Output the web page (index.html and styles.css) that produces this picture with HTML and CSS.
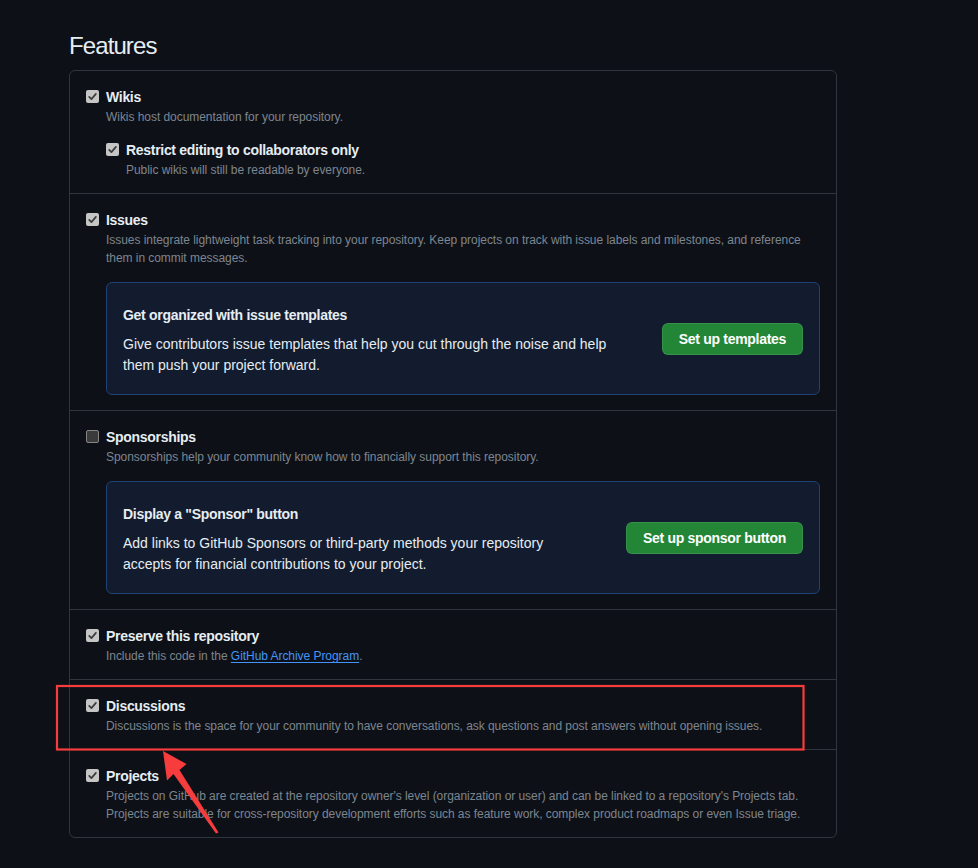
FILE: index.html
```html
<!DOCTYPE html>
<html lang="en">
<head>
<meta charset="utf-8">
<title>Features</title>
<link rel="stylesheet" href="styles.css">
</head>
<body>
<div class="page">
  <section class="settings">
    <h2 class="heading">Features</h2>
    <div class="box">
      <div class="row">
        <div class="feature">
          <span class="check on"><svg viewBox="0 0 13 13" width="13" height="13"><path d="M3.2 6.9 L5.4 9.1 L9.9 3.9" fill="none" stroke="#3b3b3b" stroke-width="1.7" stroke-linecap="round" stroke-linejoin="round"/></svg></span>
          <div class="title">Wikis</div>
          <p class="desc">Wikis host documentation for your repository.</p>
          <div class="feature nested">
            <span class="check on"><svg viewBox="0 0 13 13" width="13" height="13"><path d="M3.2 6.9 L5.4 9.1 L9.9 3.9" fill="none" stroke="#3b3b3b" stroke-width="1.7" stroke-linecap="round" stroke-linejoin="round"/></svg></span>
            <div class="title">Restrict editing to collaborators only</div>
            <p class="desc">Public wikis will still be readable by everyone.</p>
          </div>
        </div>
      </div>

      <div class="row">
        <div class="feature">
          <span class="check on"><svg viewBox="0 0 13 13" width="13" height="13"><path d="M3.2 6.9 L5.4 9.1 L9.9 3.9" fill="none" stroke="#3b3b3b" stroke-width="1.7" stroke-linecap="round" stroke-linejoin="round"/></svg></span>
          <div class="title">Issues</div>
          <p class="desc">Issues integrate lightweight task tracking into your repository. Keep projects on track with issue labels and milestones, and reference<br>them in commit messages.</p>
          <div class="promo">
            <div class="promo-text">
              <h3 class="promo-title">Get organized with issue templates</h3>
              <p class="promo-body">Give contributors issue templates that help you cut through the noise and help<br>them push your project forward.</p>
            </div>
            <button class="btn" type="button">Set up templates</button>
          </div>
        </div>
      </div>

      <div class="row">
        <div class="feature">
          <span class="check off"></span>
          <div class="title">Sponsorships</div>
          <p class="desc">Sponsorships help your community know how to financially support this repository.</p>
          <div class="promo">
            <div class="promo-text">
              <h3 class="promo-title">Display a "Sponsor" button</h3>
              <p class="promo-body">Add links to GitHub Sponsors or third-party methods your repository<br>accepts for financial contributions to your project.</p>
            </div>
            <button class="btn" type="button">Set up sponsor button</button>
          </div>
        </div>
      </div>

      <div class="row">
        <div class="feature">
          <span class="check on"><svg viewBox="0 0 13 13" width="13" height="13"><path d="M3.2 6.9 L5.4 9.1 L9.9 3.9" fill="none" stroke="#3b3b3b" stroke-width="1.7" stroke-linecap="round" stroke-linejoin="round"/></svg></span>
          <div class="title">Preserve this repository</div>
          <p class="desc">Include this code in the <a class="link" href="#">GitHub Archive Program</a>.</p>
        </div>
      </div>

      <div class="row">
        <div class="feature">
          <span class="check on"><svg viewBox="0 0 13 13" width="13" height="13"><path d="M3.2 6.9 L5.4 9.1 L9.9 3.9" fill="none" stroke="#3b3b3b" stroke-width="1.7" stroke-linecap="round" stroke-linejoin="round"/></svg></span>
          <div class="title">Discussions</div>
          <p class="desc">Discussions is the space for your community to have conversations, ask questions and post answers without opening issues.</p>
        </div>
      </div>

      <div class="row">
        <div class="feature">
          <span class="check on"><svg viewBox="0 0 13 13" width="13" height="13"><path d="M3.2 6.9 L5.4 9.1 L9.9 3.9" fill="none" stroke="#3b3b3b" stroke-width="1.7" stroke-linecap="round" stroke-linejoin="round"/></svg></span>
          <div class="title">Projects</div>
          <p class="desc">Projects on GitHub are created at the repository owner's level (organization or user) and can be linked to a repository's Projects tab.<br>Projects are suitable for cross-repository development efforts such as feature work, complex product roadmaps or even Issue triage.</p>
        </div>
      </div>
    </div>
  </section>

  <svg class="annotation" width="978" height="868" viewBox="0 0 978 868" aria-hidden="true">
    <rect x="57" y="686" width="746.5" height="63.5" fill="none" stroke="#f63c3c" stroke-width="2.2"/>
    <polygon points="163,751 186.5,764 179.5,770 218.5,832.5 216,833.5 173.5,774 167,780.5" fill="#f63c3c"/>
  </svg>
</div>
</body>
</html>
```

FILE: styles.css
```css
* {
  box-sizing: border-box;
}

html,
body {
  margin: 0;
  background: #0d1117;
}

body {
  font-family: "Liberation Sans", Arial, sans-serif;
  color: #e6edf3;
}

.page {
  position: relative;
  min-height: 868px;
  padding: 28px 0 0 69px;
}

.settings {
  width: 768px;
}

.heading {
  margin: 0 0 6px;
  font-size: 24px;
  font-weight: 400;
  line-height: 36px;
  letter-spacing: -0.9px;
  color: #e6edf3;
}

.box {
  border: 1px solid #30363d;
  border-radius: 6px;
}

.row {
  padding: 16px 16px 14px;
  border-top: 1px solid #30363d;
}

.row:first-child {
  border-top: 0;
}

.feature {
  display: grid;
  grid-template-columns: 13px 1fr;
  column-gap: 7px;
  align-items: start;
}

.check {
  grid-column: 1;
  grid-row: 1;
  width: 13px;
  height: 13px;
  margin-top: 3px;
  border-radius: 2px;
  display: block;
}

.check svg {
  display: block;
}

.check.on {
  background: #c5c5c5;
}

.check.off {
  background: #3b3b3b;
  border: 1px solid #858585;
}

.title {
  grid-column: 2;
  grid-row: 1;
  font-size: 14px;
  font-weight: 700;
  line-height: 21px;
  letter-spacing: -0.3px;
  color: #e6edf3;
}

.desc {
  grid-column: 2;
  margin: 0;
  font-size: 12px;
  line-height: 18px;
  letter-spacing: -0.05px;
  color: #7d8590;
}

.link {
  color: #4493f8;
  text-decoration: underline;
  text-underline-offset: 2px;
}

.nested {
  grid-column: 2;
  margin-top: 14px;
}

.promo {
  grid-column: 2;
  margin: 15px 0 1px;
  display: flex;
  align-items: center;
  justify-content: space-between;
  gap: 16px;
  padding: 22px 16px 18px;
  background: #121c2e;
  border: 1px solid #1e4273;
  border-radius: 6px;
}

.promo-title {
  margin: 0 0 8px;
  font-size: 14px;
  font-weight: 700;
  line-height: 21px;
  letter-spacing: -0.3px;
  color: #e6edf3;
}

.promo-body {
  margin: 0;
  font-size: 14px;
  line-height: 21px;
  color: #e6edf3;
}

.btn {
  flex: none;
  height: 32px;
  margin-top: -4px;
  padding: 0 16px;
  font-family: inherit;
  font-size: 14px;
  font-weight: 700;
  letter-spacing: -0.3px;
  color: #ffffff;
  background: #238636;
  border: 1px solid rgba(240, 246, 252, 0.1);
  border-radius: 6px;
}

.annotation {
  position: absolute;
  left: 0;
  top: 0;
  pointer-events: none;
}
```
